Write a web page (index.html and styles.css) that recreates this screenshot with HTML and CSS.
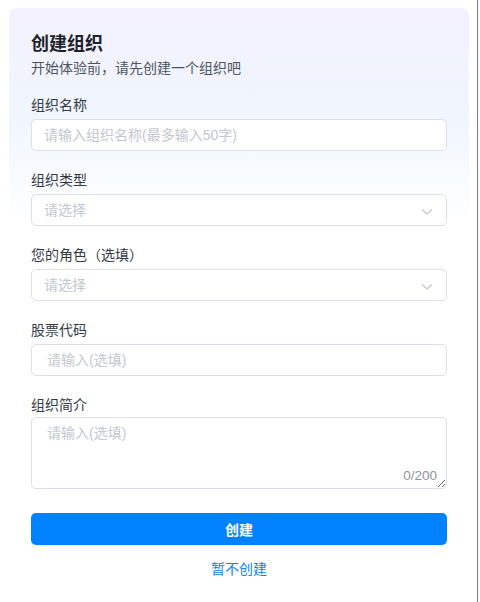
FILE: index.html
```html
<!DOCTYPE html>
<html lang="zh-CN">
<head>
<meta charset="utf-8">
<title>创建组织</title>
<link rel="stylesheet" href="styles.css">
</head>
<body>
<div class="frame">
  <div class="card">
    <h1 class="title">创建组织</h1>
    <p class="subtitle">开始体验前，请先创建一个组织吧</p>

    <div class="field">
      <label class="label">组织名称</label>
      <input class="input" type="text" placeholder="请输入组织名称(最多输入50字)">
    </div>

    <div class="field">
      <label class="label">组织类型</label>
      <div class="select">
        <span class="select-ph">请选择</span>
        <svg class="chev" width="12" height="8" viewBox="0 0 12 8"><path d="M1 1.5 L6 6 L11 1.5" fill="none" stroke="#c0c4cc" stroke-width="1.1"/></svg>
      </div>
    </div>

    <div class="field">
      <label class="label">您的角色（选填）</label>
      <div class="select">
        <span class="select-ph">请选择</span>
        <svg class="chev" width="12" height="8" viewBox="0 0 12 8"><path d="M1 1.5 L6 6 L11 1.5" fill="none" stroke="#c0c4cc" stroke-width="1.1"/></svg>
      </div>
    </div>

    <div class="field">
      <label class="label">股票代码</label>
      <input class="input input-wide" type="text" placeholder="请输入(选填)">
    </div>

    <div class="field field-area">
      <label class="label">组织简介</label>
      <div class="area-wrap">
        <textarea class="area" placeholder="请输入(选填)"></textarea>
        <span class="count">0/200</span>
      </div>
    </div>

    <button class="btn" type="button">创建</button>
    <div class="skip">暂不创建</div>
  </div>
</div>
</body>
</html>
```

FILE: styles.css
```css
* { box-sizing: border-box; }
html, body { margin: 0; padding: 0; background: #fff; }
body {
  font-family: "Liberation Sans", "Noto Sans CJK SC", sans-serif;
  font-size: 14px;
  color: #303133;
  width: 480px;
  height: 602px;
  overflow: hidden;
}
.frame {
  width: 478px;
  height: 602px;
  border-right: 1px solid #7a7a7a;
  padding: 8px 8px 0 9px;
}
.card {
  width: 460px;
  height: 620px;
  border-radius: 8px;
  background: linear-gradient(180deg, #f3f1fe 0px, #f0f6fe 110px, #ffffff 215px);
  padding: 23px 22px 0 22px;
}
.title {
  margin: 0;
  font-size: 18px;
  line-height: 26px;
  font-weight: 700;
  color: #1f2329;
}
.subtitle {
  margin: 0 0 16px 0;
  font-size: 14px;
  line-height: 22px;
  color: #4e5560;
}
.field {
  display: flex;
  flex-direction: column;
  gap: 4px;
  margin-bottom: 19px;
}
.label {
  font-size: 14px;
  line-height: 20px;
  color: #333a44;
}
.input, .select {
  width: 416px;
  height: 32px;
  border: 1px solid #dcdfe6;
  border-radius: 5px;
  background: #fff;
  font-family: inherit;
  font-size: 14px;
  color: #303133;
  padding: 0 12px;
  outline: none;
}
.input::placeholder, .area::placeholder { color: #c3c7cf; }
.input-wide { padding: 0 15px; }
.select {
  display: flex;
  align-items: center;
  justify-content: space-between;
  padding: 0 13px 0 12px;
}
.select-ph { color: #c3c7cf; line-height: 20px; }
.chev { display: block; margin-top: 3px; }
.field-area { gap: 2px; margin-bottom: 24px; }
.area-wrap { position: relative; width: 416px; }
.area {
  display: block;
  width: 416px;
  height: 72px;
  border: 1px solid #dcdfe6;
  border-radius: 5px;
  background: #fff;
  font-family: inherit;
  font-size: 14px;
  line-height: 20px;
  padding: 5px 15px;
  outline: none;
  resize: vertical;
}
.count {
  position: absolute;
  right: 10px;
  bottom: 4px;
  font-size: 13.5px;
  line-height: 18px;
  color: #909399;
}
.btn {
  display: block;
  width: 416px;
  height: 32px;
  border: none;
  border-radius: 5px;
  background: #0082ff;
  color: #fff;
  font-family: inherit;
  font-size: 14px;
  font-weight: 700;
  padding: 0;
}
.skip {
  margin-top: 14px;
  text-align: center;
  font-size: 14px;
  line-height: 20px;
  color: #0a84f0;
}
```
